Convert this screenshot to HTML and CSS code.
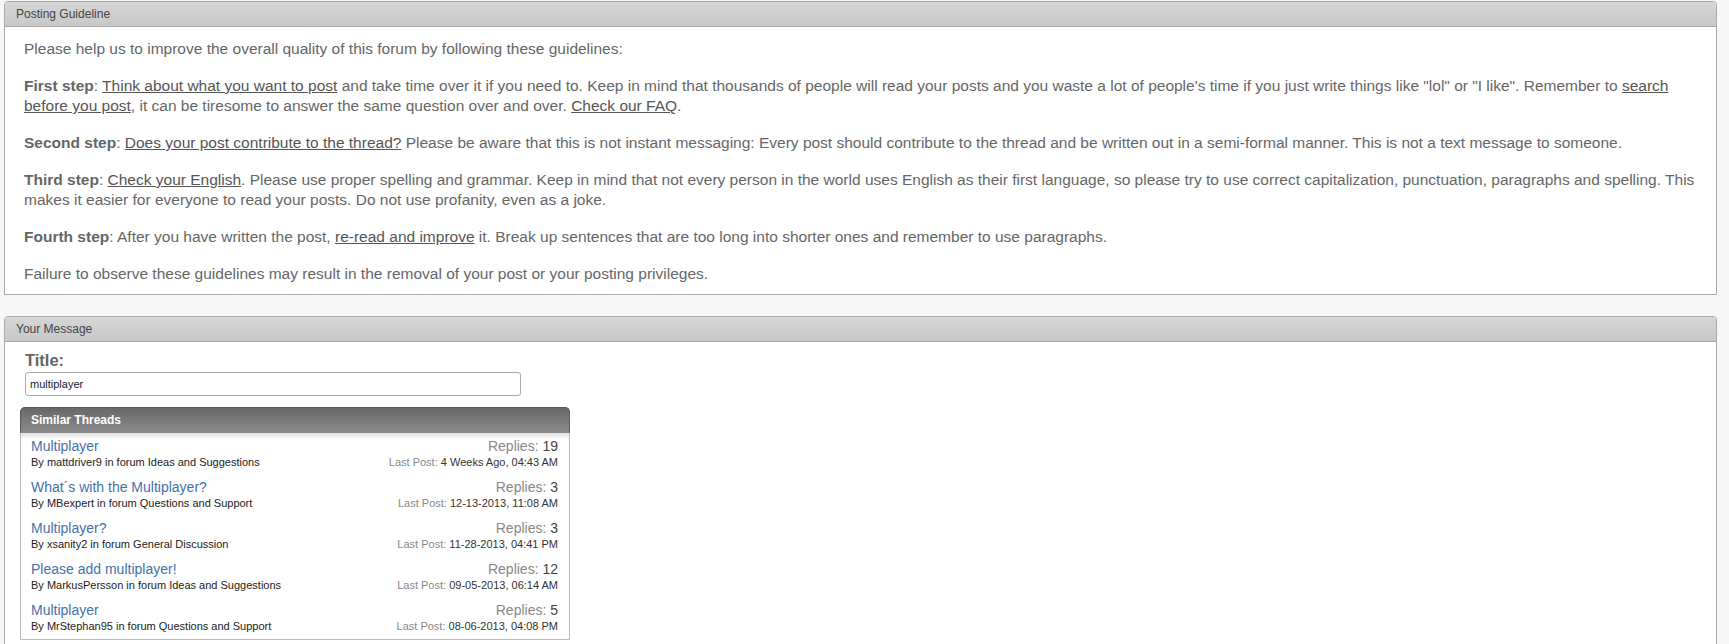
FILE: index.html
```html
<!DOCTYPE html>
<html lang="en">
<head>
    <meta charset="UTF-8">
    <title>Posting Guideline</title>
    <link rel="stylesheet" href="styles.css">
</head>
<body>
    <div class="block">
        <div class="block-head">Posting Guideline</div>
        <div class="block-body guideline">
            <p>Please help us to improve the overall quality of this forum by following these guidelines:</p>
            <p><b>First step</b>: <a href="#">Think about what you want to post</a> and take time over it if you need to. Keep in mind that thousands of people will read your posts and you waste a lot of people's time if you just write things like "lol" or "I like". Remember to <a href="#">search<br>before you post</a>, it can be tiresome to answer the same question over and over. <a href="#">Check our FAQ</a>.</p>
            <p><b>Second step</b>: <a href="#">Does your post contribute to the thread?</a> Please be aware that this is not instant messaging: Every post should contribute to the thread and be written out in a semi-formal manner. This is not a text message to someone.</p>
            <p><b>Third step</b>: <a href="#">Check your English</a>. Please use proper spelling and grammar. Keep in mind that not every person in the world uses English as their first language, so please try to use correct capitalization, punctuation, paragraphs and spelling. This<br>makes it easier for everyone to read your posts. Do not use profanity, even as a joke.</p>
            <p><b>Fourth step</b>: After you have written the post, <a href="#">re-read and improve</a> it. Break up sentences that are too long into shorter ones and remember to use paragraphs.</p>
            <p>Failure to observe these guidelines may result in the removal of your post or your posting privileges.</p>
        </div>
    </div>

    <div class="block">
        <div class="block-head">Your Message</div>
        <div class="block-body message">
            <label class="title-label" for="title">Title:</label>
            <input type="text" id="title" class="title-input" value="multiplayer">

            <div class="similar">
                <div class="similar-head">Similar Threads</div>
                <ul class="similar-list">
                    <li>
                        <div class="thread-main">
                            <a href="#" class="thread-title">Multiplayer</a>
                            <div class="thread-by">By mattdriver9 in forum Ideas and Suggestions</div>
                        </div>
                        <div class="thread-stats">
                            <div class="replies">Replies: <span>19</span></div>
                            <div class="lastpost">Last Post: <span>4 Weeks Ago, 04:43 AM</span></div>
                        </div>
                    </li>
                    <li>
                        <div class="thread-main">
                            <a href="#" class="thread-title">What´s with the Multiplayer?</a>
                            <div class="thread-by">By MBexpert in forum Questions and Support</div>
                        </div>
                        <div class="thread-stats">
                            <div class="replies">Replies: <span>3</span></div>
                            <div class="lastpost">Last Post: <span>12-13-2013, 11:08 AM</span></div>
                        </div>
                    </li>
                    <li>
                        <div class="thread-main">
                            <a href="#" class="thread-title">Multiplayer?</a>
                            <div class="thread-by">By xsanity2 in forum General Discussion</div>
                        </div>
                        <div class="thread-stats">
                            <div class="replies">Replies: <span>3</span></div>
                            <div class="lastpost">Last Post: <span>11-28-2013, 04:41 PM</span></div>
                        </div>
                    </li>
                    <li>
                        <div class="thread-main">
                            <a href="#" class="thread-title">Please add multiplayer!</a>
                            <div class="thread-by">By MarkusPersson in forum Ideas and Suggestions</div>
                        </div>
                        <div class="thread-stats">
                            <div class="replies">Replies: <span>12</span></div>
                            <div class="lastpost">Last Post: <span>09-05-2013, 06:14 AM</span></div>
                        </div>
                    </li>
                    <li>
                        <div class="thread-main">
                            <a href="#" class="thread-title">Multiplayer</a>
                            <div class="thread-by">By MrStephan95 in forum Questions and Support</div>
                        </div>
                        <div class="thread-stats">
                            <div class="replies">Replies: <span>5</span></div>
                            <div class="lastpost">Last Post: <span>08-06-2013, 04:08 PM</span></div>
                        </div>
                    </li>
                </ul>
            </div>
        </div>
    </div>
</body>
</html>
```

FILE: styles.css
```css
body {
    margin: 0;
    padding: 1px 12px 0 4px;
    background: #f7f7f7;
    font-family: Tahoma, "Liberation Sans", Arial, sans-serif;
    color: #666;
}
.block {
    margin-bottom: 21px;
    border: 1px solid #aaa;
    border-radius: 4px 4px 0 0;
    background: #fff;
}
.block-head {
    height: 24px;
    line-height: 24px;
    padding: 0 11px;
    font-size: 12px;
    color: #444;
    background: linear-gradient(#d6d6d6, #c8c8c8);
    border-bottom: 1px solid #aaa;
    border-radius: 3px 3px 0 0;
}
.guideline {
    padding: 12px 19px 10px;
    font-size: 15.5px;
    line-height: 20px;
    white-space: nowrap;
}
.guideline p {
    margin: 0 0 17px;
}
.guideline p:last-child {
    margin-bottom: 0;
}
.guideline b {
    color: #666;
}
.guideline a {
    color: #555;
}
.message {
    padding: 8px 15px 20px;
}
.title-label {
    display: block;
    padding-left: 5px;
    font-size: 16.5px;
    font-weight: bold;
    line-height: 20px;
    color: #666;
}
.title-input {
    display: block;
    box-sizing: border-box;
    width: 496px;
    height: 24px;
    margin: 2px 0 11px 5px;
    padding: 0 4px;
    border: 1px solid #aaa;
    border-radius: 3px;
    font-family: Tahoma, "Liberation Sans", Arial, sans-serif;
    font-size: 11px;
    color: #1a1a2a;
}
.similar {
    width: 548px;
    border: 1px solid #bbb;
    border-radius: 5px 5px 0 0;
}
.similar-head {
    height: 25px;
    line-height: 25px;
    padding: 0 10px;
    font-size: 12px;
    font-weight: bold;
    color: #fff;
    background: linear-gradient(#686868, #8c8c8c);
    border: 1px solid #5a5a5a;
    border-bottom: none;
    margin: -1px -1px 0;
    border-radius: 5px 5px 0 0;
}
.similar-list {
    list-style: none;
    margin: 0;
    padding: 1px 0 0;
    box-shadow: inset 0 7px 6px -5px rgba(0, 0, 0, 0.18);
}
.similar-list li {
    display: flex;
    justify-content: space-between;
    align-items: flex-start;
    padding: 4px 11px 6px 10px;
}
.thread-title {
    display: block;
    font-size: 14px;
    line-height: 17px;
    color: #4571aa;
    text-decoration: none;
}
.thread-by {
    font-size: 11px;
    line-height: 14px;
    color: #222;
}
.thread-stats {
    text-align: right;
}
.replies {
    font-size: 14px;
    line-height: 17px;
    color: #888;
}
.replies span {
    color: #444;
}
.lastpost {
    font-size: 11px;
    line-height: 14px;
    color: #888;
}
.lastpost span {
    color: #333;
}
```
